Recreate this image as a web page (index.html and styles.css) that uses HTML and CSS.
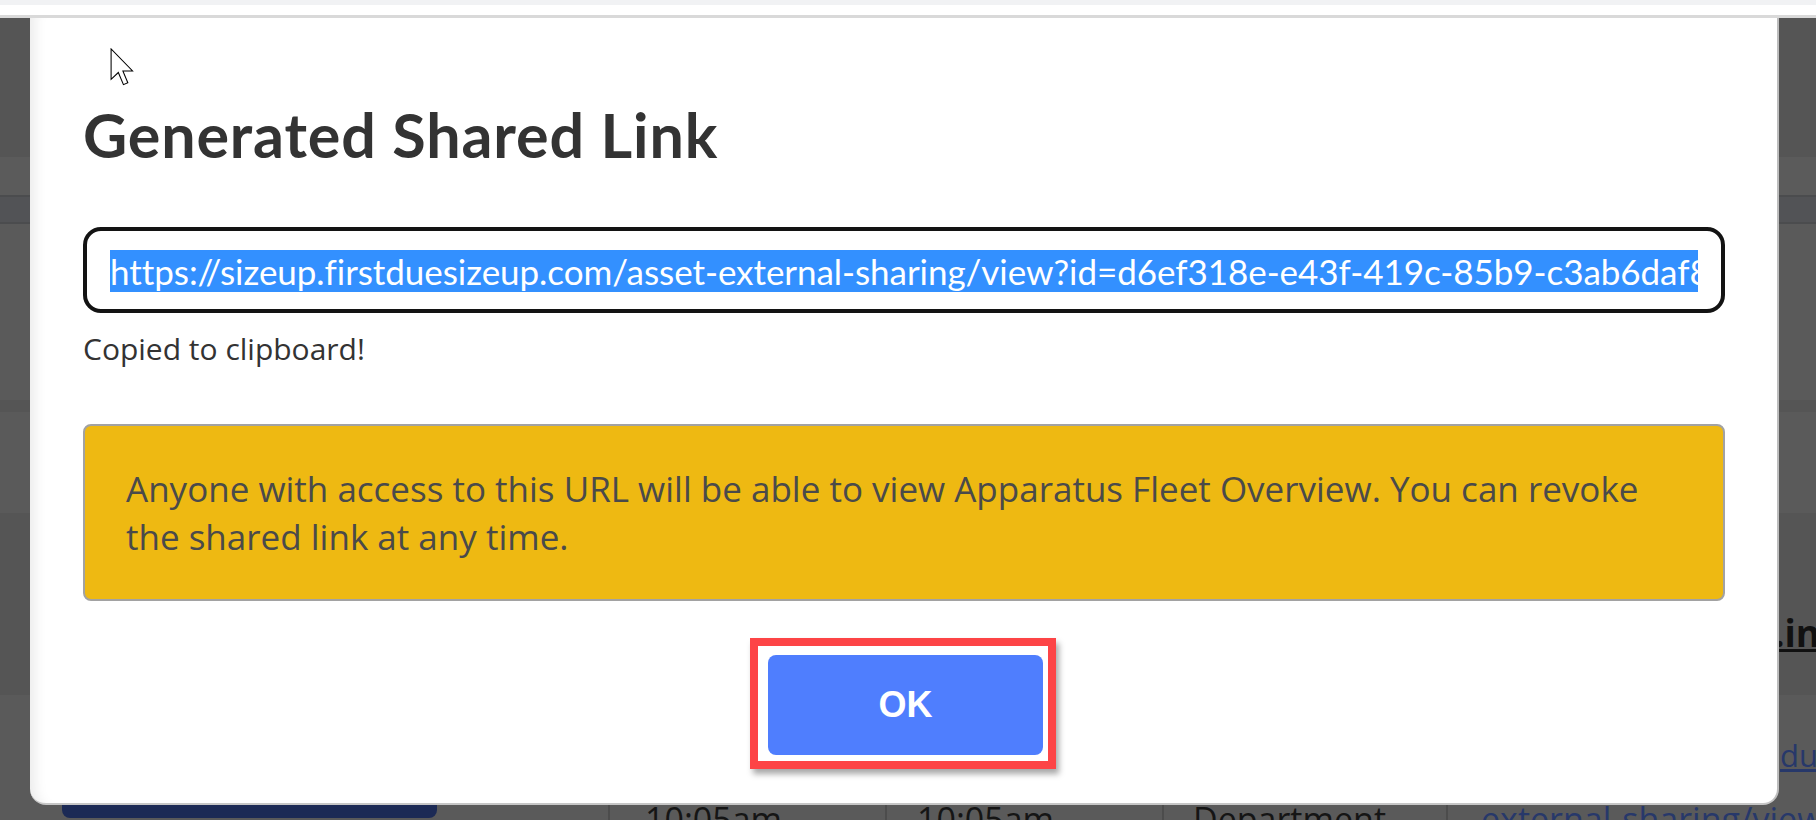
FILE: index.html
```html
<!DOCTYPE html>
<html lang="en">
<head>
    <meta charset="UTF-8">
    <meta name="viewport" content="width=device-width, initial-scale=1.0">
    <link rel="stylesheet" href="styles.css">
    <title>Generated Shared Link</title>
</head>
<body>
    <div class="topbar"></div>

    <!-- page underneath the backdrop -->
    <div class="page">
        <div class="band band-a"></div>
        <div class="band band-b"></div>
        <div class="band band-line"></div>
        <div class="band band-c"></div>
        <div class="band band-line"></div>
        <div class="band band-d"></div>
        <div class="band band-e"></div>
        <div class="band band-f"></div>
        <div class="band band-g"><span class="page-heading">.info</span></div>
        <div class="band band-h"><a class="page-link" href="#">duesizeup.com/asset-</a></div>
        <div class="page-table">
            <div class="cell cell-first"><span class="navy-btn"></span></div>
            <div class="cell cell-time">10:05am</div>
            <div class="cell cell-time">10:05am</div>
            <div class="cell cell-dept">Department</div>
            <div class="cell cell-url"><a href="#">external-sharing/view</a></div>
        </div>
    </div>

    <div class="modal" role="dialog" aria-labelledby="modal-title">
        <h2 id="modal-title" class="modal-title">Generated Shared Link</h2>

        <div class="link-field">
            <span class="link-text">https://sizeup.firstduesizeup.com/asset-external-sharing/view?id=d6ef318e-e43f-419c-85b9-c3ab6daf8a21</span>
        </div>
        <p class="copied">Copied to clipboard!</p>

        <div class="warning">
            Anyone with access to this URL will be able to view Apparatus Fleet Overview. You can revoke the shared link at any time.
        </div>

        <div class="actions">
            <div class="highlight">
                <button class="ok-btn">OK</button>
            </div>
        </div>
    </div>

    <svg class="cursor" width="25" height="38" viewBox="0 0 13 20">
        <path d="M0.5 0.5 L0.5 16.5 L4.3 12.9 L7 19.3 L9.3 18.3 L6.7 12.1 L11.8 12.1 Z" fill="#fff" stroke="#000" stroke-width="0.55" stroke-linejoin="miter"/>
    </svg>
</body>
</html>
```

FILE: styles.css
```css
html, body {
    margin: 0;
    padding: 0;
}

body {
    width: 1816px;
    height: 820px;
    overflow: hidden;
    position: relative;
    background-color: #5a5a5a;
    font-family: "Open Sans", "Liberation Sans", sans-serif;
}

.topbar {
    height: 15px;
    background: linear-gradient(#f1f2f4 0, #f1f2f4 5px, #fff 5px);
    border-bottom: 3px solid #d9d9d9;
}

/* dimmed page under the backdrop */
.page {
    height: 802px;
    overflow: hidden;
}

.band {
    width: 100%;
}

.band-a { height: 139px; background-color: #555555; }
.band-b { height: 38px; background-color: #5b5b5b; }
.band-line { height: 2px; background-color: #4b4c4e; }
.band-c { height: 25px; background-color: #525356; }
.band-d { height: 176px; background-color: #5a5a5a; }
.band-e { height: 12px; background-color: #555555; }
.band-f { height: 101px; background-color: #5a5a5a; }

.band-g {
    height: 182px;
    box-sizing: border-box;
    padding: 100px 0 0 1774px;
    background-color: #555555;
    white-space: nowrap;
    overflow: hidden;
}

.page-heading {
    font-size: 37px;
    font-weight: 700;
    line-height: 40px;
    color: #111;
    text-decoration: underline;
}

.band-h {
    height: 107px;
    box-sizing: border-box;
    padding: 40px 0 0 1780px;
    white-space: nowrap;
    overflow: hidden;
}

.page-link {
    font-size: 31px;
    line-height: 40px;
    color: #27386a;
}

.page-table {
    display: flex;
    height: 60px;
    font-size: 34px;
    line-height: 34px;
    color: #151515;
    white-space: nowrap;
    overflow: hidden;
}

.cell {
    box-sizing: border-box;
    border-right: 2px solid #4c4c4c;
    padding-left: 33px;
}

.cell-first {
    width: 610px;
    padding-left: 62px;
}

.navy-btn {
    display: block;
    width: 375px;
    height: 16px;
    border-radius: 0 0 8px 8px;
    background-color: #1c2a55;
}

.cell-time { width: 277px; padding-left: 30px; }
.cell-time:nth-child(2) { padding-left: 35px; }
.cell-dept { width: 284px; padding-left: 29px; }

.cell-url {
    flex: 1;
    border-right: none;
    overflow: hidden;
}

.cell-url a {
    color: #27386a;
}

/* modal */
.modal {
    position: absolute;
    top: 18px;
    left: 30px;
    width: 1749px;
    height: 787px;
    box-sizing: border-box;
    padding: 81px 52px 0 53px;
    background-color: #fff;
    border-right: 2px solid #bdbdbd;
    border-bottom: 2px solid #c6c6c6;
    border-radius: 0 0 16px 16px;
    box-shadow: inset 16px 0 14px -12px rgba(0, 0, 0, 0.09);
}

.modal-title {
    margin: 0;
    font-family: Lato, "Open Sans", sans-serif;
    font-size: 61px;
    font-weight: 700;
    line-height: 72px;
    letter-spacing: 0.85px;
    color: #333;
}

.link-field {
    margin-top: 56px;
    height: 86px;
    box-sizing: border-box;
    padding: 19px 23px 0 23px;
    border: 4px solid #131313;
    border-radius: 18px;
    overflow: hidden;
    white-space: nowrap;
}

.link-text {
    display: block;
    overflow: hidden;
    font-family: Lato, "Liberation Sans", sans-serif;
    font-size: 35px;
    line-height: 42px;
    letter-spacing: -0.05px;
    color: #fff;
    background-color: #3390ff;
}

.copied {
    margin: 15px 0 0;
    font-size: 30px;
    line-height: 41px;
    color: #333;
}

.warning {
    margin-top: 55px;
    padding: 39px 60px 38px 41px;
    background-color: #eeb912;
    border: 2px solid #a2a2a2;
    border-radius: 8px;
    font-size: 35px;
    line-height: 48px;
    color: #4a4a4a;
}

.actions {
    display: flex;
    justify-content: center;
    margin-top: 37px;
    padding-right: 2px;
}

.highlight {
    padding: 9px 5px 6px 10px;
    border: 8px solid #fd4446;
    box-shadow: 3px 5px 6px rgba(0, 0, 0, 0.35);
}

.ok-btn {
    display: block;
    width: 275px;
    height: 100px;
    border: none;
    border-radius: 8px;
    background-color: #4f7efe;
    color: #fff;
    font-family: "Liberation Sans", Arial, sans-serif;
    font-size: 36px;
    font-weight: 700;
}

.cursor {
    position: absolute;
    top: 48px;
    left: 110px;
}
```
